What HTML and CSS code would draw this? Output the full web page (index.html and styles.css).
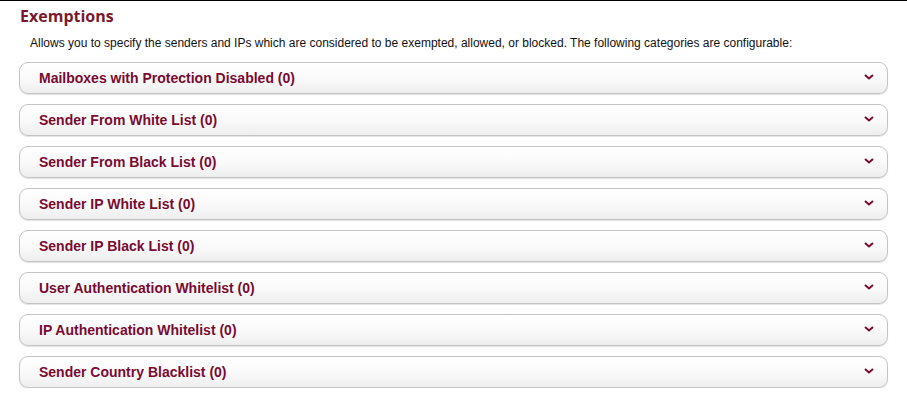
FILE: index.html
```html
<!DOCTYPE html>
<html>
<head>
<meta charset="utf-8">
<link rel="stylesheet" href="styles.css">
</head>
<body>
<div class="page">
  <h1 class="title">Exemptions</h1>
  <p class="desc">Allows you to specify the senders and IPs which are considered to be exempted, allowed, or blocked. The following categories are configurable:</p>
  <div class="list">
    <div class="item"><span class="label">Mailboxes with Protection Disabled (0)</span><svg class="chev" viewBox="0 0 10 6" width="10" height="6"><path d="M1 1 L5 4.5 L9 1" fill="none" stroke="#7a0a30" stroke-width="2"/></svg></div>
    <div class="item"><span class="label">Sender From White List (0)</span><svg class="chev" viewBox="0 0 10 6" width="10" height="6"><path d="M1 1 L5 4.5 L9 1" fill="none" stroke="#7a0a30" stroke-width="2"/></svg></div>
    <div class="item"><span class="label">Sender From Black List (0)</span><svg class="chev" viewBox="0 0 10 6" width="10" height="6"><path d="M1 1 L5 4.5 L9 1" fill="none" stroke="#7a0a30" stroke-width="2"/></svg></div>
    <div class="item"><span class="label">Sender IP White List (0)</span><svg class="chev" viewBox="0 0 10 6" width="10" height="6"><path d="M1 1 L5 4.5 L9 1" fill="none" stroke="#7a0a30" stroke-width="2"/></svg></div>
    <div class="item"><span class="label">Sender IP Black List (0)</span><svg class="chev" viewBox="0 0 10 6" width="10" height="6"><path d="M1 1 L5 4.5 L9 1" fill="none" stroke="#7a0a30" stroke-width="2"/></svg></div>
    <div class="item"><span class="label">User Authentication Whitelist (0)</span><svg class="chev" viewBox="0 0 10 6" width="10" height="6"><path d="M1 1 L5 4.5 L9 1" fill="none" stroke="#7a0a30" stroke-width="2"/></svg></div>
    <div class="item"><span class="label">IP Authentication Whitelist (0)</span><svg class="chev" viewBox="0 0 10 6" width="10" height="6"><path d="M1 1 L5 4.5 L9 1" fill="none" stroke="#7a0a30" stroke-width="2"/></svg></div>
    <div class="item"><span class="label">Sender Country Blacklist (0)</span><svg class="chev" viewBox="0 0 10 6" width="10" height="6"><path d="M1 1 L5 4.5 L9 1" fill="none" stroke="#7a0a30" stroke-width="2"/></svg></div>
  </div>
</div>
</body>
</html>
```
FILE: styles.css
```css
html, body {
  margin: 0;
  padding: 0;
  background: #fff;
}
.page {
  border-top: 1px solid #000;
  padding: 5px 19px 0 19px;
  width: 869px;
  font-family: "Liberation Sans", Arial, sans-serif;
}
.title {
  margin: 0 0 0 1px;
  font-family: "Open Sans", "Liberation Sans", sans-serif;
  font-size: 16px;
  font-weight: 700;
  line-height: 20px;
  color: #7a1a2c;
}
.desc {
  margin: 10px 0 0 11px;
  font-size: 12px;
  line-height: 14px;
  color: #111;
}
.list {
  display: flex;
  flex-direction: column;
  gap: 10px;
  margin-top: 12px;
}
.item {
  box-sizing: border-box;
  height: 32px;
  border: 1px solid #c4c4c4;
  border-radius: 9px;
  background: linear-gradient(#ffffff 0%, #fafafa 50%, #eeeeee 100%);
  box-shadow: 0 1px 1px rgba(0,0,0,0.12);
  display: flex;
  align-items: center;
  justify-content: space-between;
  padding: 0 13px 0 19px;
}
.label {
  font-size: 14px;
  font-weight: 700;
  color: #7a0a30;
}
.chev {
  display: block;
  margin-top: -3px;
}
```
